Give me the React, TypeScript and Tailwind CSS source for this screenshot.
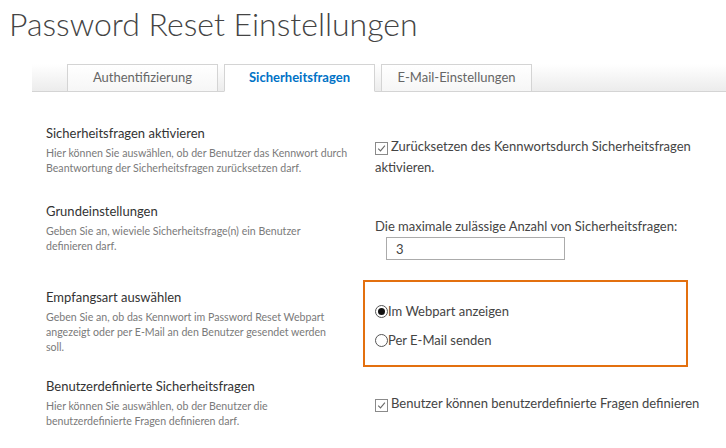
import React from "react";

const font = { fontFamily: "Lato, 'Open Sans', sans-serif" };

function Checkbox() {
  return (
    <span className="mr-[3px] inline-flex h-[13px] w-[13px] translate-y-[2px] items-center justify-center border border-[#8a8a8a] bg-white align-baseline">
      <svg width="9" height="9" viewBox="0 0 9 9">
        <path d="M1.2 4.6 L3.5 6.9 L7.9 1.6" fill="none" stroke="#6a6a6a" strokeWidth="1.1" />
      </svg>
    </span>
  );
}

function Radio({ checked }: { checked?: boolean }) {
  return (
    <span className="inline-flex h-[13px] w-[13px] items-center justify-center rounded-full border border-[#555] bg-white">
      {checked && <span className="h-[7px] w-[7px] rounded-full bg-[#111]" />}
    </span>
  );
}

function Section({ title, desc, className, children }: { title: string; desc: string[]; className: string; children?: React.ReactNode }) {
  return (
    <div className={`flex ${className}`}>
      <div className="w-[363px] shrink-0 whitespace-nowrap pl-[46px]">
        <div className="text-[13px] leading-[18px] text-[#333]">{title}</div>
        <div className="mt-[4px] text-[10.6px] leading-[15px] text-[#7a7a7a]">
          {desc.map((d, i) => (
            <div key={i}>{d}</div>
          ))}
        </div>
      </div>
      <div className="min-w-0 flex-1">{children}</div>
    </div>
  );
}

export default function App() {
  const tabs = ["Authentifizierung", "Sicherheitsfragen", "E-Mail-Einstellungen"];
  return (
    <div className="h-[448px] w-[726px] overflow-hidden bg-white" style={font}>
      <h1 className="pl-[9px] pt-[3px] text-[32px] font-light leading-[42px] text-[#444]">
        Password Reset Einstellungen
      </h1>
      <div className="ml-[32px] mt-[19px] flex h-[28px] items-end gap-[6px] border-b border-[#d4d4d4] bg-gradient-to-b from-white to-[#ececec] pl-[35px]">
        {tabs.map((t, i) => (
          <div
            key={t}
            className={`-mb-px flex h-[28px] w-[151px] items-center justify-center border border-[#d4d4d4] text-[13px] ${
              i === 1
                ? "border-b-white bg-white font-bold text-[#0072c6]"
                : "bg-gradient-to-b from-white to-[#f6f6f6] text-[#666]"
            }`}
          >
            {t}
          </div>
        ))}
      </div>

      <Section
        className="mt-[32px]"
        title="Sicherheitsfragen aktivieren"
        desc={["Hier können Sie auswählen, ob der Benutzer das Kennwort durch", "Beantwortung der Sicherheitsfragen zurücksetzen darf."]}
      >
        <div className="ml-[12px] mt-[12px] text-[13px] leading-[21px] text-[#444]">
          <Checkbox />
          Zurücksetzen des Kennwortsdurch Sicherheitsfragen aktivieren.
        </div>
      </Section>

      <Section
        className="mt-[24px]"
        title="Grundeinstellungen"
        desc={["Geben Sie an, wieviele  Sicherheitsfrage(n) ein Benutzer", "definieren darf."]}
      >
        <div className="ml-[12px] mt-[14px] text-[13px] leading-[20px] text-[#444]">
          Die maximale zulässige Anzahl von Sicherheitsfragen:
          <div className="ml-[11px] mt-[1px] flex h-[23px] w-[179px] items-center border border-[#ababab] px-[9px] text-[13px]">
            3
          </div>
        </div>
      </Section>

      <Section
        className="mt-[28px]"
        title="Empfangsart auswählen"
        desc={["Geben Sie an, ob das Kennwort im Password Reset Webpart", "angezeigt oder per E-Mail an den Benutzer gesendet werden", "soll."]}
      >
        <div className="-mt-[8px] h-[87px] w-[325px] border-2 border-[#e3700f] pl-[10px] pt-[19px] text-[13px] leading-[21px] text-[#444]">
          <div className="flex items-center">
            <Radio checked />
            Im Webpart anzeigen
          </div>
          <div className="mt-[8px] flex items-center">
            <Radio />
            Per E-Mail senden
          </div>
        </div>
      </Section>

      <Section
        className="mt-[10px]"
        title="Benutzerdefinierte Sicherheitsfragen"
        desc={["Hier können Sie auswählen, ob der Benutzer die", "benutzerdefinierte Fragen definieren darf."]}
      >
        <div className="ml-[12px] mt-[16px] text-[13px] leading-[21px] text-[#444]">
          <Checkbox />
          Benutzer können benutzerdefinierte Fragen definieren
        </div>
      </Section>
    </div>
  );
}
